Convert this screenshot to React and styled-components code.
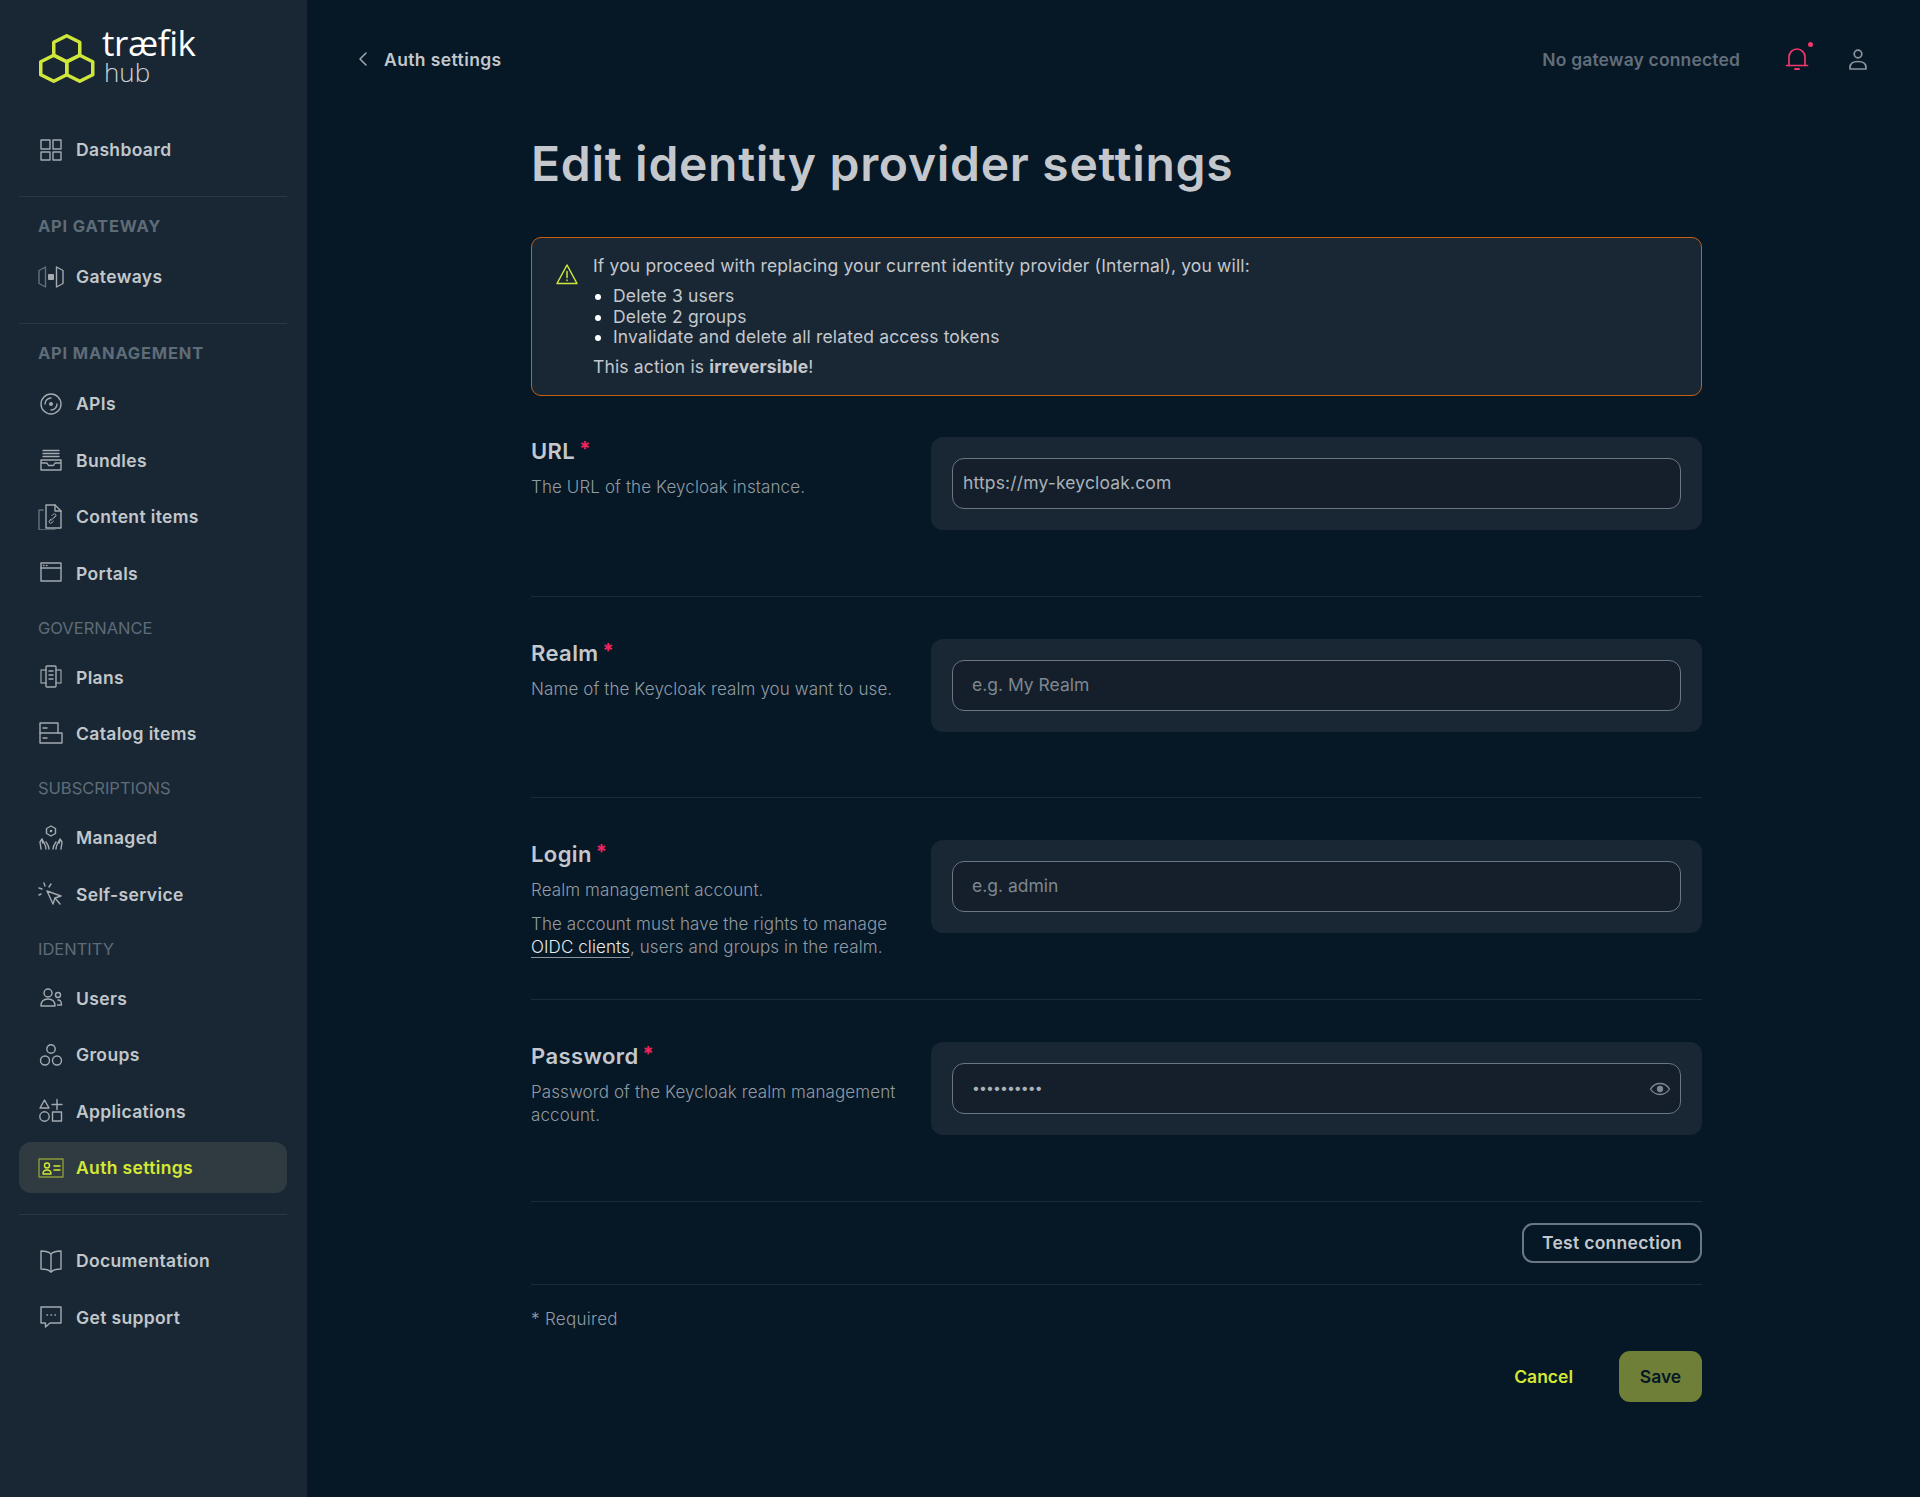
import React from "react";
import styled, { createGlobalStyle } from "styled-components";

const GlobalStyle = createGlobalStyle`
  * { box-sizing: border-box; }
  html, body { margin: 0; padding: 0; background: #061726; }
  body { font-family: "Inter", "Noto Sans", sans-serif; color: #c4c8cc; }
`;

const Svg = ({ children, w = 26, h = 26, vb = "0 0 26 26", sw = 1.4 }) => (
  <svg width={w} height={h} viewBox={vb} fill="none" stroke="currentColor" strokeWidth={sw} strokeLinejoin="round" strokeLinecap="round">
    {children}
  </svg>
);

const DashboardIcon = () => (
  <Svg>
    <rect x="3" y="3" width="9" height="9" />
    <rect x="15" y="3" width="8" height="9" />
    <rect x="3" y="15" width="9" height="8" />
    <rect x="15" y="15" width="8" height="8" />
  </Svg>
);
const GatewayIcon = () => (
  <Svg>
    <path d="M7.5 3 1 6.500v13L7.500 23z" opacity=".55" />
    <path d="M18.5 3 25 6.500v13L18.500 23z" />
    <rect x="10" y="10" width="6" height="6" rx="1" fill="currentColor" stroke="none" />
  </Svg>
);
const ApiIcon = () => (
  <Svg>
    <circle cx="13" cy="13" r="10" />
    <path d="M7 13a6 6 0 0 1 6-6M19 13a6 6 0 0 1-6 6" />
    <circle cx="13" cy="13" r="2" fill="currentColor" stroke="none" />
  </Svg>
);
const BundleIcon = () => (
  <Svg>
    <path d="M5 3.500h16M5 6.500h16M5 9.500h16" />
    <path d="M3 13h20v10H3zM3 16h6l1.500 2.500h5L17 16h6" />
  </Svg>
);
const ContentIcon = () => (
  <Svg>
    <path d="M8 1h9l6 6v17H8z" />
    <path d="M17 1v6h6" />
    <path d="M12.500 17l5-5M13 15l-1.500 1.500a1.600 1.600 0 0 0 2.400 2.200l1.500-1.500M16 14l1.600-1.600a1.600 1.600 0 0 0-2.300-2.200L14 11.500" strokeWidth="1" />
    <path d="M5 6H1v20h16" opacity=".55" />
  </Svg>
);
const PortalIcon = () => (
  <Svg>
    <rect x="3" y="3" width="20" height="18" />
    <path d="M3 8h20" />
    <path d="M5.500 5.500h.5M8.500 5.500h.5" />
  </Svg>
);
const PlanIcon = () => (
  <Svg>
    <rect x="8" y="2" width="10" height="21" rx="1" />
    <path d="M8 6H3v13h5M18 6h5v13h-5" opacity=".8" />
    <path d="M11 7h4M11 11h4M11 15h4" />
  </Svg>
);
const CatalogIcon = () => (
  <Svg>
    <path d="M2 12V2h18v10" />
    <rect x="2" y="12" width="22" height="10" />
    <path d="M5 7h4M5 17h4" />
  </Svg>
);
const ManagedIcon = () => (
  <Svg>
    <path d="M13 1 17.500 3.500v5L13 11 8.500 8.500v-5z" />
    <circle cx="13" cy="6" r="1.300" fill="currentColor" stroke="none" />
    <path d="M3 24l-1-7 2-3 .8 4M8 24c0-3-1-5-4-10M11 24c0-3-1-4-3-7" />
    <path d="M23 24l1-7-2-3-.8 4M18 24c0-3 1-5 4-10M15 24c0-3 1-4 3-7" />
  </Svg>
);
const SelfServiceIcon = () => (
  <Svg>
    <path d="M9 10l14 5-6 2-2 6z" />
    <path d="M17 17l5 6" />
    <path d="M6 2l1 3M13 3l-2 3M1 7l3 1M1 14l2-1" />
  </Svg>
);
const UsersIcon = () => (
  <Svg>
    <circle cx="10" cy="8" r="4" />
    <path d="M3 21c0-5 3-7 7-7s7 2 7 7z" />
    <circle cx="20" cy="10" r="2.500" />
    <path d="M20 15c2 0 3.500 1.500 3.500 5h-4" />
  </Svg>
);
const GroupsIcon = () => (
  <Svg>
    <circle cx="13" cy="7" r="4.200" />
    <circle cx="7" cy="18.500" r="4.500" />
    <circle cx="19" cy="18.500" r="4.500" />
  </Svg>
);
const ApplicationsIcon = () => (
  <Svg>
    <path d="M6.500 2 11 10H2z" />
    <circle cx="6.500" cy="18.500" r="4.700" />
    <path d="M19 1.500v10M14 6.500h10" />
    <rect x="14.500" y="14" width="9" height="9" />
  </Svg>
);
const AuthIcon = () => (
  <Svg>
    <rect x="1" y="4" width="24" height="18" opacity=".55" />
    <circle cx="9" cy="10.500" r="2.500" />
    <path d="M5 19c0-3 2-4 4-4s4 1 4 4z" />
    <path d="M16 11h6M16 15h6" />
  </Svg>
);
const BookIcon = () => (
  <Svg>
    <path d="M13 6c-2-2-6-3-10-3v18c4 0 8 1 10 3 2-2 6-3 10-3V3c-4 0-8 1-10 3z" />
    <path d="M13 6v18" />
  </Svg>
);
const SupportIcon = () => (
  <Svg>
    <path d="M3 3h20v16H12l-4.500 4v-4H3z" />
    <path d="M9 11h.5M13 11h.5M17 11h.5" />
  </Svg>
);

const LogoMark = () => (
  <svg width="56" height="49" viewBox="0 0 56 49" fill="none" stroke="#cfe73b" strokeWidth="3.500" strokeLinejoin="round">
    <path d="M27.750 1.750 40.750 8.250v13L27.750 27.750 14.750 21.250v-13z" />
    <path d="M14.750 21.250 27.750 27.750v13L14.750 47.250 1.750 40.750v-13z" />
    <path d="M40.750 21.250 53.750 27.750v13L40.750 47.250 27.750 40.750v-13z" />
  </svg>
);

const Page = styled.div`
  display: flex;
  min-height: 1497px;
`;

const Sidebar = styled.aside`
  flex: 0 0 307px;
  background: #192734;
  padding: 0 20px 0 19px;
`;

const LogoRow = styled.div`
  display: flex;
  align-items: center;
  gap: 7px;
  height: 124px;
  padding: 0 0 8px 20px;
`;

const LogoWords = styled.div`
  display: flex;
  flex-direction: column;
  color: #fff;
  font-family: "Open Sans", sans-serif;
  margin-top: -4px;
`;

const LogoName = styled.span`
  font-size: 35px;
  line-height: 32px;
  font-weight: 400;
  letter-spacing: -0.4px;
`;

const LogoSub = styled.span`
  font-size: 26px;
  line-height: 26px;
  font-weight: 300;
  color: #cfd3d6;
  padding-left: 2px;
`;

const NavList = styled.nav`
  display: flex;
  flex-direction: column;
  gap: 5.500px;
`;

const NavDivider = styled.div`
  height: 1px;
  background: #2a3743;
  margin: 21px 0 20px;
`;

const SectionLabel = styled.div`
  font-size: 16.500px;
  line-height: 20px;
  font-weight: ${(p) => (p.$strong ? 700 : 400)};
  letter-spacing: ${(p) => (p.$strong ? "0.8px" : "0")};
  color: #5e6c78;
  padding-left: 19px;
  margin: ${(p) => (p.$strong ? "-1px 0 15px" : "19px 0 14px")};
`;

const NavItem = styled.a`
  display: flex;
  align-items: center;
  gap: 12px;
  height: 51px;
  padding-left: 19px;
  border-radius: 12px;
  font-size: 17.500px;
  font-weight: 600;
  letter-spacing: 0.35px;
  color: ${(p) => (p.$active ? "#d4e935" : "#c2c7cb")};
  background: ${(p) => (p.$active ? "#2f3b40" : "transparent")};

  svg {
    color: ${(p) => (p.$active ? "#d4e935" : "#a3aab0")};
    flex-shrink: 0;
  }
`;

const Main = styled.main`
  flex: 1;
  min-width: 0;
`;

const Header = styled.header`
  display: flex;
  align-items: center;
  height: 120px;
  padding: 0 49px 2px 49px;
`;

const BackLink = styled.a`
  display: flex;
  align-items: center;
  gap: 14px;
  font-size: 17.500px;
  font-weight: 600;
  letter-spacing: 0.4px;
  color: #c2c7cb;
  svg { color: #a3aab0; }
`;

const HeaderRight = styled.div`
  margin-left: auto;
  display: flex;
  align-items: center;
`;

const GatewayStatus = styled.span`
  font-size: 17.500px;
  font-weight: 600;
  letter-spacing: 0.15px;
  color: #626e79;
  margin-right: 44px;
`;

const BellWrap = styled.span`
  position: relative;
  display: flex;
  color: #f0386b;
  margin-right: 35px;
`;

const BellDot = styled.span`
  position: absolute;
  top: -4px;
  right: -3px;
  width: 5px;
  height: 5px;
  border-radius: 50%;
  background: #f0386b;
`;

const UserWrap = styled.span`
  display: flex;
  color: #8b949c;
`;

const Content = styled.div`
  width: 1171px;
  margin-left: 224px;
`;

const Title = styled.h1`
  margin: 15px 0 44px;
  font-size: 48px;
  line-height: 58px;
  font-weight: 600;
  letter-spacing: 0.7px;
  color: #c4c8cc;
`;

const Alert = styled.section`
  display: flex;
  gap: 15px;
  height: 159px;
  margin-bottom: -1px;
  padding: 16px 26px 0 24px;
  background: #192734;
  border: 1.500px solid #c75f14;
  border-radius: 10px;
  font-size: 17.500px;
  letter-spacing: 0.15px;
  color: #c4c8cc;
`;

const AlertIcon = styled.div`
  color: #cfe73b;
  padding-top: 9px;
  line-height: 0;
`;

const AlertLine = styled.p`
  margin: 0;
  line-height: 23px;
`;

const AlertList = styled.ul`
  margin: 9px 0 7px;
  padding: 0 0 0 20px;
  line-height: 20.500px;
  li::marker { color: #fff; }
`;

const Row = styled.section`
  display: grid;
  grid-template-columns: 400px 1fr;
  align-items: start;
  height: 201.670px;
  padding-top: 42px;
  border-bottom: 1px solid #1c2b3a;
`;

const FieldInfo = styled.div`
  margin-top: -1px;
  padding-right: 20px;
`;

const FieldLabel = styled.label`
  display: block;
  font-size: 22px;
  line-height: 26px;
  font-weight: 600;
  letter-spacing: 0.4px;
  color: #c4c8cc;
  margin-bottom: 12px;
`;

const Star = styled.span`
  color: #f0245f;
  font-size: 20px;
  font-weight: 700;
  vertical-align: 3px;
  margin-left: -2px;
`;

const FieldDesc = styled.p`
  margin: 0 0 11px;
  font-size: 17px;
  line-height: 23px;
  font-weight: 300;
  letter-spacing: 0.1px;
  color: #929ba3;
`;

const DocLink = styled.a`
  color: #e8eaec;
  border-bottom: 1px solid #8c959d;
`;

const InputCard = styled.div`
  position: relative;
  height: 93px;
  padding: 21px;
  background: #192734;
  border-radius: 12px;
`;

const Input = styled.input`
  display: block;
  width: 100%;
  height: 51px;
  padding: 0 ${(p) => (p.$compact ? "10px" : "19px")} 2px;
  background: #141f2b;
  border: 1.500px solid #6a7680;
  border-radius: 12px;
  outline: none;
  font-family: inherit;
  font-size: ${(p) => (p.type === "password" ? "14px" : "17.500px")};
  letter-spacing: ${(p) => (p.type === "password" ? "-0.9px" : p.$compact ? "0.15px" : "0")};
  color: #aab1b7;

  &::placeholder {
    color: #7d8790;
    opacity: 1;
  }
`;

const EyeButton = styled.span`
  position: absolute;
  top: 36px;
  right: 31px;
  display: flex;
  color: #7d8790;
`;

const TestRow = styled.div`
  display: flex;
  justify-content: flex-end;
  padding: 21px 0 21px;
  border-bottom: 1px solid #1c2b3a;
`;

const OutlineButton = styled.button`
  height: 40px;
  width: 180px;
  padding: 0;
  background: transparent;
  border: 2px solid #6b7884;
  border-radius: 11px;
  font-family: inherit;
  font-size: 17.500px;
  font-weight: 600;
  letter-spacing: 0.3px;
  color: #c4c8cc;
`;

const RequiredNote = styled.p`
  margin: 23px 0 20.500px;
  font-size: 17px;
  line-height: 23px;
  font-weight: 300;
  letter-spacing: 0.3px;
  color: #929ba3;
`;

const Actions = styled.div`
  display: flex;
  justify-content: flex-end;
  align-items: center;
  gap: 46px;
`;

const CancelButton = styled.button`
  padding: 0;
  background: none;
  border: 0;
  font-family: inherit;
  font-size: 17.500px;
  font-weight: 600;
  color: #d4e935;
`;

const SaveButton = styled.button`
  width: 83px;
  height: 51px;
  background: #6f7f37;
  border: 0;
  border-radius: 11px;
  font-family: inherit;
  font-size: 17.500px;
  font-weight: 600;
  color: #061726;
`;

const gatewayItems = [["Gateways", GatewayIcon]];
const managementItems = [
  ["APIs", ApiIcon],
  ["Bundles", BundleIcon],
  ["Content items", ContentIcon],
  ["Portals", PortalIcon],
];
const governanceItems = [
  ["Plans", PlanIcon],
  ["Catalog items", CatalogIcon],
];
const subscriptionItems = [
  ["Managed", ManagedIcon],
  ["Self-service", SelfServiceIcon],
];
const identityItems = [
  ["Users", UsersIcon],
  ["Groups", GroupsIcon],
  ["Applications", ApplicationsIcon],
  ["Auth settings", AuthIcon, true],
];
const helpItems = [
  ["Documentation", BookIcon],
  ["Get support", SupportIcon],
];

const NavGroup = ({ items }) => (
  <NavList>
    {items.map(([label, Icon, active]) => (
      <NavItem key={label} $active={active}>
        <Icon />
        {label}
      </NavItem>
    ))}
  </NavList>
);

const Field = ({ label, children, input }) => (
  <Row>
    <FieldInfo>
      <FieldLabel>
        {label} <Star>*</Star>
      </FieldLabel>
      {children}
    </FieldInfo>
    <InputCard>{input}</InputCard>
  </Row>
);

const App = () => (
  <>
    <GlobalStyle />
    <Page>
      <Sidebar>
        <LogoRow>
          <LogoMark />
          <LogoWords>
            <LogoName>træfik</LogoName>
            <LogoSub>hub</LogoSub>
          </LogoWords>
        </LogoRow>
        <NavGroup items={[["Dashboard", DashboardIcon]]} />
        <NavDivider />
        <SectionLabel $strong>API GATEWAY</SectionLabel>
        <NavGroup items={gatewayItems} />
        <NavDivider />
        <SectionLabel $strong>API MANAGEMENT</SectionLabel>
        <NavGroup items={managementItems} />
        <SectionLabel>GOVERNANCE</SectionLabel>
        <NavGroup items={governanceItems} />
        <SectionLabel>SUBSCRIPTIONS</SectionLabel>
        <NavGroup items={subscriptionItems} />
        <SectionLabel>IDENTITY</SectionLabel>
        <NavGroup items={identityItems} />
        <NavDivider />
        <NavGroup items={helpItems} />
      </Sidebar>
      <Main>
        <Header>
          <BackLink>
            <svg width="14" height="18" viewBox="0 0 14 18" fill="none" stroke="currentColor" strokeWidth="1.500" strokeLinecap="round" strokeLinejoin="round">
              <path d="M10 3 4 9l6 6" />
            </svg>
            Auth settings
          </BackLink>
          <HeaderRight>
            <GatewayStatus>No gateway connected</GatewayStatus>
            <BellWrap>
              <Svg sw={1.7}>
                <path d="M5 19.500V11a8 8 0 0 1 16 0v8.500" />
                <path d="M2.500 19.500h21" />
                <path d="M11 23h4" strokeWidth="2" />
              </Svg>
              <BellDot />
            </BellWrap>
            <UserWrap>
              <Svg sw={1.7}>
                <circle cx="13" cy="8" r="3.800" />
                <path d="M5 23v-1.500c0-4 3.500-6 8-6s8 2 8 6V23z" />
              </Svg>
            </UserWrap>
          </HeaderRight>
        </Header>
        <Content>
          <Title>Edit identity provider settings</Title>
          <Alert>
            <AlertIcon>
              <svg width="22" height="22" viewBox="0 0 22 22" fill="none" stroke="currentColor" strokeWidth="1.500" strokeLinejoin="round" strokeLinecap="round">
                <path d="M11 2 21 20.500H1z" />
                <path d="M11 8.500v6M11 17v.5" />
              </svg>
            </AlertIcon>
            <div>
              <AlertLine>If you proceed with replacing your current identity provider (Internal), you will:</AlertLine>
              <AlertList>
                <li>Delete 3 users</li>
                <li>Delete 2 groups</li>
                <li>Invalidate and delete all related access tokens</li>
              </AlertList>
              <AlertLine>
                This action is <strong>irreversible</strong>!
              </AlertLine>
            </div>
          </Alert>
          <Field label="URL" input={<Input $compact defaultValue="https://my-keycloak.com" />}>
            <FieldDesc>The URL of the Keycloak instance.</FieldDesc>
          </Field>
          <Field label="Realm" input={<Input placeholder="e.g. My Realm" />}>
            <FieldDesc>Name of the Keycloak realm you want to use.</FieldDesc>
          </Field>
          <Field label="Login" input={<Input placeholder="e.g. admin" />}>
            <FieldDesc>Realm management account.</FieldDesc>
            <FieldDesc>
              The account must have the rights to manage <DocLink>OIDC clients</DocLink>, users and groups in the realm.
            </FieldDesc>
          </Field>
          <Field
            label="Password"
            input={
              <>
                <Input type="password" defaultValue="••••••••••" />
                <EyeButton>
                  <svg width="22" height="22" viewBox="0 0 22 22" fill="none" stroke="currentColor" strokeWidth="1.300">
                    <path d="M1.500 11C4 7 7.300 5.500 11 5.500S18 7 20.500 11C18 15 14.700 16.500 11 16.500S4 15 1.500 11z" />
                    <circle cx="11" cy="11" r="2.500" fill="currentColor" />
                  </svg>
                </EyeButton>
              </>
            }
          >
            <FieldDesc>Password of the Keycloak realm management account.</FieldDesc>
          </Field>
          <TestRow>
            <OutlineButton>Test connection</OutlineButton>
          </TestRow>
          <RequiredNote>* Required</RequiredNote>
          <Actions>
            <CancelButton>Cancel</CancelButton>
            <SaveButton>Save</SaveButton>
          </Actions>
        </Content>
      </Main>
    </Page>
  </>
);

export default App;
